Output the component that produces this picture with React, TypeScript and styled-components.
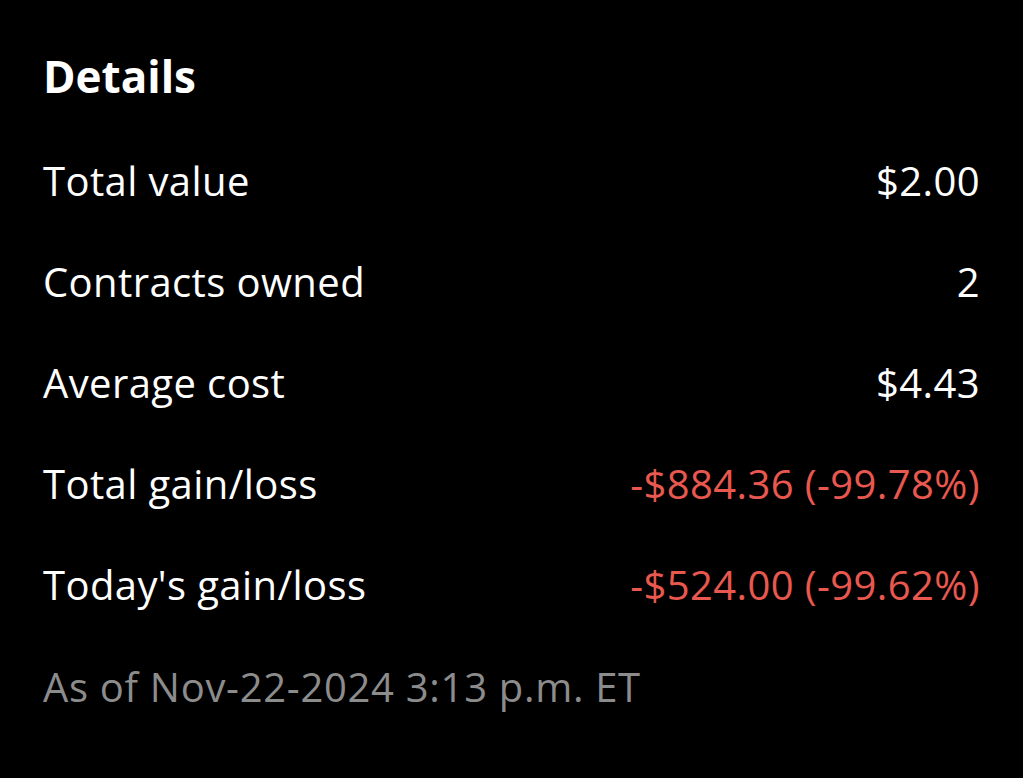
import React from "react";
import styled, { createGlobalStyle } from "styled-components";

const Global = createGlobalStyle`
  html, body { margin: 0; padding: 0; background: #000; }
  body { font-family: "Open Sans", "Noto Sans", sans-serif; color: #fff; }
`;

const Page = styled.div`
  width: 1023px;
  height: 778px;
  background: #000;
  box-sizing: border-box;
  padding: 50px 43px 0 43px;
  display: flex;
  flex-direction: column;
`;

const Title = styled.h2`
  margin: 0;
  font-size: 44px;
  font-weight: 700;
  line-height: 52px;
  color: #fff;
`;

const List = styled.div`
  display: flex;
  flex-direction: column;
  margin-top: 55px;
`;

const Row = styled.div`
  display: flex;
  justify-content: space-between;
  align-items: baseline;
  height: 101px;
  font-size: 40px;
  font-weight: 400;
  line-height: 48px;
  letter-spacing: 0.4px;
`;

const Label = styled.span`
  color: #fff;
`;

const Value = styled.span<{ $negative?: boolean }>`
  color: ${(p) => (p.$negative ? "#e8584f" : "#fff")};
`;

const Footer = styled.div`
  font-size: 40px;
  line-height: 48px;
  letter-spacing: 0.7px;
  color: #8c8c8c;
  margin-top: 1px;
`;

const rows = [
  { label: "Total value", value: "$2.00" },
  { label: "Contracts owned", value: "2" },
  { label: "Average cost", value: "$4.43" },
  { label: "Total gain/loss", value: "-$884.36 (-99.78%)", negative: true },
  { label: "Today's gain/loss", value: "-$524.00 (-99.62%)", negative: true },
];

export default function App() {
  return (
    <>
      <Global />
      <Page>
        <Title>Details</Title>
        <List>
          {rows.map((r) => (
            <Row key={r.label}>
              <Label>{r.label}</Label>
              <Value $negative={r.negative}>{r.value}</Value>
            </Row>
          ))}
        </List>
        <Footer>As of Nov-22-2024 3:13 p.m. ET</Footer>
      </Page>
    </>
  );
}
